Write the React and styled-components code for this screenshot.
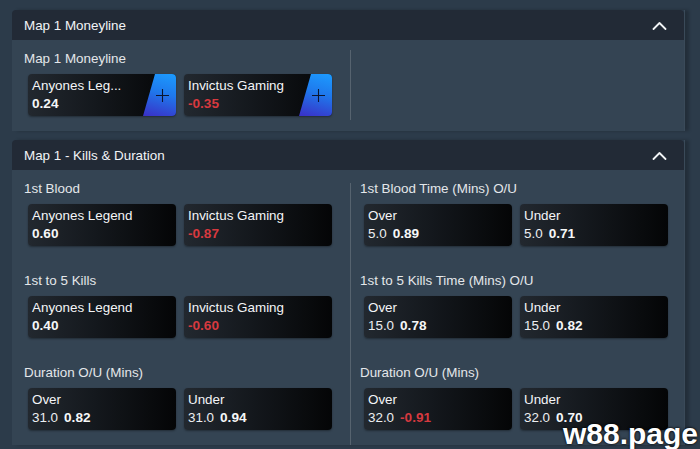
import styled, { createGlobalStyle } from 'styled-components'

const GlobalStyle = createGlobalStyle`
    * { box-sizing: border-box; }
    body {
        margin: 0;
        background: #2c3b4a;
        font-family: "Liberation Sans", Arial, sans-serif;
    }
`

const moneyline = [
    { name: 'Anyones Leg...', price: '0.24' },
    { name: 'Invictus Gaming', price: '-0.35' },
]

const leftMarkets = [
    {
        title: '1st Blood',
        picks: [
            { name: 'Anyones Legend', price: '0.60' },
            { name: 'Invictus Gaming', price: '-0.87' },
        ],
    },
    {
        title: '1st to 5 Kills',
        picks: [
            { name: 'Anyones Legend', price: '0.40' },
            { name: 'Invictus Gaming', price: '-0.60' },
        ],
    },
    {
        title: 'Duration O/U (Mins)',
        picks: [
            { name: 'Over', line: '31.0', price: '0.82' },
            { name: 'Under', line: '31.0', price: '0.94' },
        ],
    },
]

const rightMarkets = [
    {
        title: '1st Blood Time (Mins) O/U',
        picks: [
            { name: 'Over', line: '5.0', price: '0.89' },
            { name: 'Under', line: '5.0', price: '0.71' },
        ],
    },
    {
        title: '1st to 5 Kills Time (Mins) O/U',
        picks: [
            { name: 'Over', line: '15.0', price: '0.78' },
            { name: 'Under', line: '15.0', price: '0.82' },
        ],
    },
    {
        title: 'Duration O/U (Mins)',
        picks: [
            { name: 'Over', line: '32.0', price: '-0.91' },
            { name: 'Under', line: '32.0', price: '0.70' },
        ],
    },
]

function ChevronUp() {
    return (
        <svg width="15" height="9" viewBox="0 0 15 9" fill="none">
            <path d="M1.5 8 L7.5 2 L13.5 8" stroke="#f2f4f6" strokeWidth="1.8" strokeLinecap="round" strokeLinejoin="round" />
        </svg>
    )
}

function PlusIcon() {
    return (
        <svg width="13" height="13" viewBox="0 0 13 13">
            <path d="M6.5 0 V13 M0 6.5 H13" stroke="#0b1630" strokeWidth="1.1" />
        </svg>
    )
}

function Pick({ pick, addable }) {
    const negative = pick.price.startsWith('-')
    return (
        <Card>
            <CardText>
                <Name>{pick.name}</Name>
                <OddsLine>
                    {pick.line && <Line>{pick.line}</Line>}
                    <Price $negative={negative} $spaced={!!pick.line}>{pick.price}</Price>
                </OddsLine>
            </CardText>
            {addable && (
                <AddSlot>
                    <PlusIcon />
                </AddSlot>
            )}
        </Card>
    )
}

function Market({ market, addable }) {
    return (
        <MarketBox>
            <Label>{market.title}</Label>
            <Cards>
                {market.picks.map((p) => (
                    <Pick key={p.name} pick={p} addable={addable} />
                ))}
            </Cards>
        </MarketBox>
    )
}

function App() {
    return (
        <Page>
            <GlobalStyle />

            <Panel>
                <Header>
                    <span>Map 1 Moneyline</span>
                    <ChevronUp />
                </Header>
                <Body>
                    <Column>
                        <Market market={{ title: 'Map 1 Moneyline', picks: moneyline }} addable />
                    </Column>
                    <Divider $top={10} $bottom={11} />
                    <Column $right />
                </Body>
            </Panel>

            <Panel>
                <Header>
                    <span>Map 1 - Kills &amp; Duration</span>
                    <ChevronUp />
                </Header>
                <Body>
                    <Column>
                        {leftMarkets.map((m) => (
                            <Market key={m.title} market={m} />
                        ))}
                    </Column>
                    <Divider $top={13} $bottom={0} />
                    <Column $right>
                        {rightMarkets.map((m) => (
                            <Market key={m.title} market={m} />
                        ))}
                    </Column>
                </Body>
            </Panel>

            <Watermark>w88.page</Watermark>
        </Page>
    )
}

export default App

const Page = styled.div`
    position: relative;
    height: 449px;
    overflow: hidden;
    padding: 10px 16px 0 12px;
    background: #2c3b4a;
`

const Panel = styled.section`
    margin-bottom: 9px;
    box-shadow: 1px 0 0 #3a4a59, 5px 0 3px rgba(0, 0, 0, 0.22);
`

const Header = styled.div`
    height: 30px;
    display: flex;
    align-items: center;
    justify-content: space-between;
    padding: 0 17px 0 12px;
    background: #222a36;
    border-radius: 4px 4px 0 0;
    color: #f2f4f6;
    font-size: 13.4px;
`

const Body = styled.div`
    display: grid;
    grid-template-columns: 338px 1px 1fr;
    background: #344453;
`

const Column = styled.div`
    padding: 11px 0 15px ${(p) => (p.$right ? '9px' : '12px')};
`

const Divider = styled.div`
    background: #56636f;
    margin: ${(p) => p.$top}px 0 ${(p) => p.$bottom}px;
`

const MarketBox = styled.div`
    & + & {
        margin-top: 27px;
    }
`

const Label = styled.div`
    font-size: 13.4px;
    line-height: 16px;
    color: #e4e7ea;
    margin-bottom: 7px;
`

const Cards = styled.div`
    display: flex;
    gap: 8px;
    padding-left: 4px;
`

const Card = styled.div`
    width: 148px;
    height: 42px;
    display: flex;
    border-radius: 4px;
    overflow: hidden;
    background: linear-gradient(90deg, #22282f 0%, #14181d 45%, #040506 100%);
    box-shadow: 0 1px 2px rgba(0, 0, 0, 0.35);
`

const CardText = styled.div`
    flex: 1;
    min-width: 0;
    padding: 3px 0 0 4px;
`

const Name = styled.div`
    font-size: 13.4px;
    line-height: 18px;
    color: #f4f5f7;
    white-space: nowrap;
`

const OddsLine = styled.div`
    display: flex;
    align-items: baseline;
    font-size: 13.4px;
    line-height: 18px;
`

const Line = styled.span`
    color: #eceef1;
`

const Price = styled.span`
    font-size: 13.6px;
    font-weight: bold;
    color: ${(p) => (p.$negative ? '#d6393f' : '#f6f7f8')};
    margin-left: ${(p) => (p.$spaced ? '6px' : '0')};
`

const AddSlot = styled.div`
    width: 33px;
    display: flex;
    align-items: center;
    justify-content: center;
    padding-left: 6px;
    background: linear-gradient(195deg, #1c9cff 0%, #1f78ec 45%, #3a2fc6 100%);
    clip-path: polygon(12px 0, 100% 0, 100% 100%, 0 100%);
`

const Watermark = styled.div`
    position: absolute;
    right: 2px;
    bottom: 0;
    font-size: 30px;
    line-height: 30px;
    font-weight: bold;
    color: #ffffff;
    text-shadow: 0 0 2px #000, 0 0 3px rgba(0, 0, 0, 0.6);
`
